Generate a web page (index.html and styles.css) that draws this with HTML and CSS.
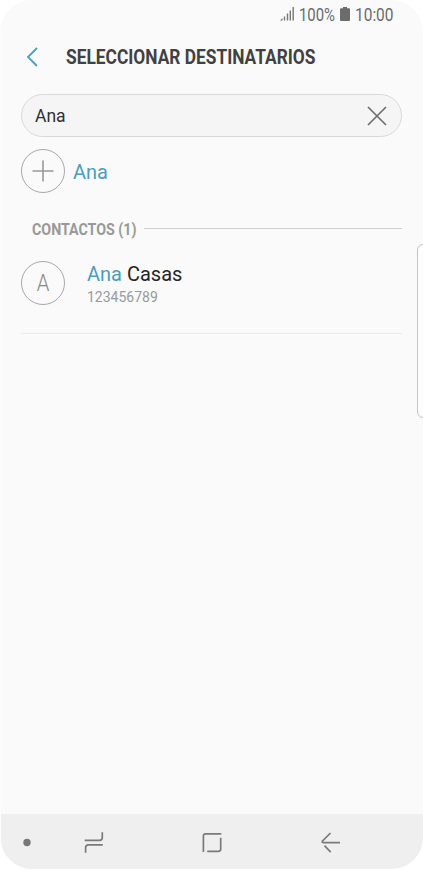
FILE: index.html
```html
<!DOCTYPE html>
<html lang="es">
<head>
<meta charset="utf-8">
<title>Seleccionar destinatarios</title>
<link rel="stylesheet" href="styles.css">
</head>
<body>
<main class="phone">
  <header class="status">
    <svg class="signal" width="16" height="14" viewBox="0 0 16 14"><path d="M1 13.5H3.5V11Z" fill="#777"/><path d="M5.5 13.5V9.5M8.5 13.5V6.5M11.3 13.5V3.5M14.2 13.5V0" stroke="#777" stroke-width="1.4"/></svg>
    <svg class="percent" width="38" height="22"><text x="0" y="15.5" textLength="36" lengthAdjust="spacingAndGlyphs">100%</text></svg>
    <svg class="battery" width="10" height="14" viewBox="0 0 10 14"><path d="M3 0H7V1.3H9Q10 1.3 10 2.3V13Q10 14 9 14H1Q0 14 0 13V2.3Q0 1.3 1 1.3H3Z" fill="#6c6c6c"/></svg>
    <svg class="clock" width="42" height="22"><text x="0" y="15.5" textLength="38.5" lengthAdjust="spacingAndGlyphs">10:00</text></svg>
  </header>
  <div class="heading">
    <svg class="back" width="12" height="20" viewBox="0 0 12 20"><path d="M11 1 2 10 11 19" fill="none" stroke="#4c9fbe" stroke-width="1.8"/></svg>
    <svg class="title" width="254" height="28"><text x="0" y="20.3" textLength="249.5" lengthAdjust="spacingAndGlyphs">SELECCIONAR DESTINATARIOS</text></svg>
  </div>
  <div class="search">
    <span>Ana</span>
    <svg width="20" height="20" viewBox="0 0 20 20"><path d="M1 1 19 19M19 1 1 19" stroke="#6f6f6f" stroke-width="1.7"/></svg>
  </div>
  <div class="add">
    <div class="circle"><svg width="22" height="22" viewBox="0 0 22 22"><path d="M11 .5V21.5M.5 11H21.5" stroke="#999" stroke-width="1.6"/></svg></div>
    <span class="match">Ana</span>
  </div>
  <div class="section">
    <svg width="106" height="24"><text x="0" y="17" textLength="104.5" lengthAdjust="spacingAndGlyphs">CONTACTOS (1)</text></svg>
    <div class="rule"></div>
  </div>
  <div class="contact">
    <div class="circle"><svg width="14" height="28"><text class="initial" x="0.7" y="22.3" textLength="12.6" lengthAdjust="spacingAndGlyphs">A</text></svg></div>
    <div class="info">
      <div class="name"><span class="match">Ana</span> Casas</div>
      <div class="number">123456789</div>
    </div>
  </div>
  <div class="edge"></div>
  <nav class="nav">
    <svg width="423" height="55" viewBox="0 0 423 55" fill="none" stroke="#7a7a7a" stroke-width="1.7">
      <circle cx="27" cy="28.5" r="3.7" fill="#777" stroke="none"/>
      <path d="M84.7 26.3H99.5Q102.3 26.3 102.3 23.5V18.3M102.8 30.8H88.5Q85.6 30.8 85.6 33.7V38.8"/>
      <path d="M203.4 38V22Q203.4 19.8 205.6 19.8H221.3M220.7 23.8V35Q220.7 37.3 218.4 37.3H207.2"/>
      <path d="M330.5 19 322.3 27.2Q321.8 28.7 323.5 28.7H340M324.5 31.7 330.7 38.2"/>
    </svg>
  </nav>
</main>
</body>
</html>
```

FILE: styles.css
```css
* { box-sizing: border-box; }
body { margin: 0; background: #fff; font-family: Roboto, sans-serif; }
svg { display: block; flex: none; overflow: visible; }
.phone {
  position: relative;
  display: flex;
  flex-direction: column;
  width: 423px;
  height: 870px;
  overflow: hidden;
  background: #fafafa;
  border-left: 1px solid #fcfcfc;
  border-bottom: 1px solid #fff;
  border-radius: 32px;
}
.status { display: flex; height: 32px; padding: 5px 0 0 278px; font-size: 18px; }
.status text { fill: #6a6a6a; }
.signal { margin: 2px 4px 0 0; }
.percent { margin-right: 3px; }
.battery { margin: 2px 5px 0 0; }
.heading { display: flex; height: 62px; padding-top: 12px; font-size: 20.5px; font-weight: 700; }
.back { margin: 3px 28px 0 25px; }
.heading text { fill: #414141; }
.search {
  display: flex;
  align-items: center;
  justify-content: space-between;
  height: 43px;
  margin: 0 21px 0 20px;
  padding: 0 14px 0 13px;
  border: 1px solid #d8d8d8;
  border-radius: 22px;
  background: #f5f5f5;
  color: #303030;
  font-size: 17.5px;
}
.add { display: flex; align-items: center; gap: 8px; height: 44px; margin: 12px 0 0 20px; font-size: 20px; }
.add .match { padding-top: 2px; }
.circle {
  display: flex;
  flex: none;
  align-items: center;
  justify-content: center;
  width: 44px;
  height: 44px;
  border: 1px solid #a8a8a8;
  border-radius: 50%;
}
.match { color: #4a9ebd; }
.section { display: flex; gap: 6px; height: 43px; margin: 25px 21px 0 31px; font-size: 17px; font-weight: 700; }
.section text { fill: #999; }
.rule { flex: 1; height: 1px; margin-top: 10px; background: #d0d0d0; }
.contact { display: flex; gap: 22px; height: 73px; margin: 0 21px 0 20px; border-bottom: 1px solid #ebebeb; }
.initial { font-size: 24px; font-weight: 300; fill: #888; }
.name { height: 26px; color: #252525; font-size: 20px; line-height: 26px; }
.number { color: #999; font-size: 14px; line-height: 20px; }
.edge {
  position: absolute;
  top: 244px;
  right: -10px;
  width: 16px;
  height: 174px;
  border: 1px solid #c4c4c4;
  border-radius: 6px;
  background: #fdfdfd;
}
.nav { height: 55px; margin: auto 0 0 -1px; background: #efefef; }
```
